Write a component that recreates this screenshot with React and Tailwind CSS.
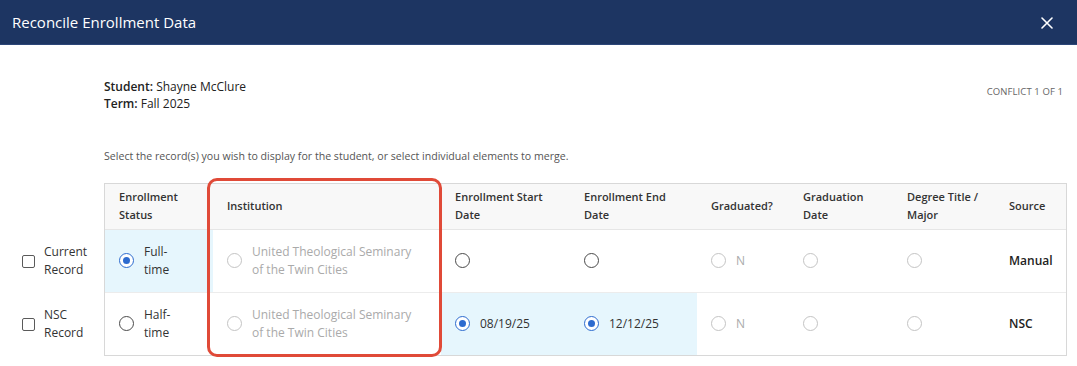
import React from "react";

function Radio({ state = "off" }) {
  if (state === "on")
    return (
      <span className="inline-flex h-[15px] w-[15px] shrink-0 items-center justify-center rounded-full border-[1.5px] border-[#2d6bcf] bg-white">
        <span className="h-[7px] w-[7px] rounded-full bg-[#2d6bcf]" />
      </span>
    );
  if (state === "dis")
    return <span className="inline-block h-[15px] w-[15px] shrink-0 rounded-full border-[1.5px] border-[#c4c4c4] bg-white" />;
  return <span className="inline-block h-[15px] w-[15px] shrink-0 rounded-full border-[1.5px] border-[#4a4a4a] bg-white" />;
}

const cols = "grid grid-cols-[108px_228px_129px_127px_92px_104px_102px_71px]";

function Cell({ children, className = "" }) {
  return <div className={`flex items-center px-[14px] ${className}`}>{children}</div>;
}

function HCell({ children }) {
  return (
    <div className="flex items-center px-[14px] text-[11px] font-semibold leading-[18px] text-[#333]">
      {children}
    </div>
  );
}

export default function App() {
  const font = { fontFamily: "'Open Sans', 'Noto Sans', sans-serif" };
  return (
    <div className="h-[366px] w-[1077px] overflow-hidden bg-white" style={font}>
      <div className="flex h-[45px] items-center justify-between border-b border-[#2c4678] bg-[#1d3562] pl-[12px] pr-[24px]">
        <span className="text-[15px] text-white">Reconcile Enrollment Data</span>
        <svg width="12" height="12" viewBox="0 0 12 12" className="mt-[1px]">
          <path d="M1 1L11 11M11 1L1 11" stroke="white" strokeWidth="1.6" strokeLinecap="round" />
        </svg>
      </div>

      <div className="flex items-start justify-between pl-[104px] pr-[14px] pt-[33px]">
        <div className="text-[12px] leading-[17px] text-[#222]">
          <div>
            <span className="font-semibold">Student:</span> Shayne McClure
          </div>
          <div>
            <span className="font-semibold">Term:</span> Fall 2025
          </div>
        </div>
        <div className="pt-[7px] text-[9.5px] tracking-[0.1px] text-[#666]">CONFLICT 1 OF 1</div>
      </div>

      <div className="mt-[37px] pl-[104px] text-[10.6px] text-[#555]">
        Select the record(s) you wish to display for the student, or select individual elements to merge.
      </div>

      <div className="mt-[18px] flex">
        <div className="flex w-[104px] flex-col pl-[22px]">
          <div className="h-[47px]" />
          {["Current", "NSC"].map((l) => (
            <div key={l} className="flex h-[63px] items-center gap-[9px]">
              <span className="h-[13px] w-[13px] rounded-[2px] border-[1.5px] border-[#5a5a5a]" />
              <span className="text-[12px] leading-[18px] text-[#333]">
                {l}
                <br />
                Record
              </span>
            </div>
          ))}
        </div>

        <div className="relative">
          <div className="border border-[#d8d8d8]">
            <div className={`${cols} h-[46px] border-b border-[#e6e6e6] bg-[#f8f8f8]`}>
              <HCell>Enrollment<br />Status</HCell>
              <HCell>Institution</HCell>
              <HCell>Enrollment Start<br />Date</HCell>
              <HCell>Enrollment End<br />Date</HCell>
              <HCell>Graduated?</HCell>
              <HCell>Graduation<br />Date</HCell>
              <HCell>Degree Title /<br />Major</HCell>
              <HCell>Source</HCell>
            </div>

            <div className={`${cols} h-[63px] border-b border-[#ececec] text-[12px] text-[#333]`}>
              <Cell className="gap-[10px] bg-[#e6f6fd]">
                <Radio state="on" />
                <span className="leading-[18px]">Full-<br />time</span>
              </Cell>
              <Cell className="gap-[10px]">
                <Radio state="dis" />
                <span className="leading-[18px] text-[#aaa]">United Theological Seminary<br />of the Twin Cities</span>
              </Cell>
              <Cell><Radio /></Cell>
              <Cell><Radio /></Cell>
              <Cell className="gap-[10px]"><Radio state="dis" /><span className="text-[#aaa]">N</span></Cell>
              <Cell><Radio state="dis" /></Cell>
              <Cell><Radio state="dis" /></Cell>
              <Cell className="font-semibold text-[#222]">Manual</Cell>
            </div>

            <div className={`${cols} h-[62px] text-[12px] text-[#333]`}>
              <Cell className="gap-[10px]">
                <Radio />
                <span className="leading-[18px]">Half-<br />time</span>
              </Cell>
              <Cell className="gap-[10px]">
                <Radio state="dis" />
                <span className="leading-[18px] text-[#aaa]">United Theological Seminary<br />of the Twin Cities</span>
              </Cell>
              <Cell className="gap-[10px] bg-[#e6f6fd]"><Radio state="on" /><span>08/19/25</span></Cell>
              <Cell className="gap-[10px] bg-[#e6f6fd]"><Radio state="on" /><span>12/12/25</span></Cell>
              <Cell className="gap-[10px]"><Radio state="dis" /><span className="text-[#aaa]">N</span></Cell>
              <Cell><Radio state="dis" /></Cell>
              <Cell><Radio state="dis" /></Cell>
              <Cell className="font-semibold text-[#222]">NSC</Cell>
            </div>
          </div>
          <div className="pointer-events-none absolute left-[103px] top-[-5px] h-[179px] w-[235px] rounded-[10px] border-[3px] border-[#e04a38]" />
        </div>
      </div>
    </div>
  );
}
